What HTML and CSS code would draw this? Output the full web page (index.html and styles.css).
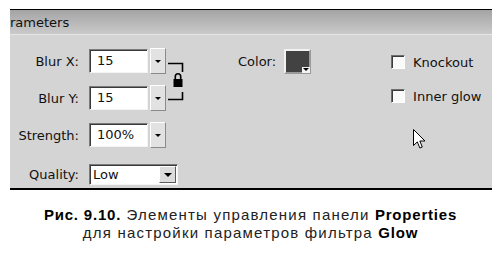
FILE: index.html
```html
<!DOCTYPE html>
<html lang="ru">
<head>
    <meta charset="UTF-8">
    <meta name="viewport" content="width=device-width, initial-scale=1.0">
    <title>Glow</title>
    <link rel="stylesheet" href="styles.css">
</head>
<body>

<div class="panel">
    <div class="panel-head">rameters</div>

    <div class="panel-body">
        <div class="fields">
            <span class="lbl">Blur X:</span>
            <div class="num">15</div>
            <div class="spin"><span class="tri"></span></div>
            <svg class="lock" width="20" height="63" viewBox="0 0 20 63">
                <path d="M2 15.5 H16.5 V24" fill="none" stroke="#000" stroke-width="1.6"/>
                <path d="M16.5 44 V51.5 H2" fill="none" stroke="#000" stroke-width="1.6"/>
                <path d="M9.3 31 V28.5 a2.7 2.7 0 0 1 5.4 0 V31" fill="none" stroke="#000" stroke-width="1.6"/>
                <rect x="7.5" y="31" width="9" height="8" fill="#000"/>
            </svg>

            <span class="lbl">Blur Y:</span>
            <div class="num">15</div>
            <div class="spin"><span class="tri"></span></div>

            <span class="lbl">Strength:</span>
            <div class="num">100%</div>
            <div class="spin"><span class="tri"></span></div>

            <span class="lbl lbl-q">Quality:</span>
            <div class="combo">Low<span class="combo-btn"><span class="tri"></span></span></div>
        </div>

        <div class="color-group">
            <span>Color:</span>
            <span class="swatch"><span class="swatch-tri"></span></span>
        </div>

        <div class="checks">
            <div class="check"><span class="box"></span>Knockout</div>
            <div class="check"><span class="box"></span>Inner glow</div>
        </div>
    </div>

    <svg class="cursor" width="13" height="21" viewBox="0 0 13 21">
        <path d="M0.5 0.5 V16.5 L4.3 12.9 L6.9 19 L9.3 18 L6.8 12 H12 Z" fill="#fff" stroke="#000" stroke-width="1"/>
    </svg>
</div>

<p class="caption">
    <b>Рис. 9.10.</b> Элементы управления панели <b>Properties</b><br>
    для настройки параметров фильтра <b>Glow</b>
</p>

</body>
</html>
```

FILE: styles.css
```css
body {
    margin: 0;
    background: #fff;
    font-family: "DejaVu Sans", Verdana, sans-serif;
    font-size: 13px;
    color: #111;
}

.panel {
    position: relative;
    margin: 9px 0 0 10px;
    width: 482px;
    background: #d4d4d4;
    border-top: 1px solid #000;
    border-bottom: 2px solid #000;
}
.panel-head {
    height: 24px;
    line-height: 26px;
    background: linear-gradient(#a4a4a4, #cacaca);
    border-bottom: 1px solid #e6e6e6;
}

.panel-body {
    display: flex;
    align-items: flex-start;
    height: 153px;
    box-sizing: border-box;
    padding-top: 13px;
}

.fields {
    display: grid;
    grid-template-columns: 79px 59px 18px 20px;
    grid-template-rows: 26px 26px 26px 26px;
    row-gap: 11px;
}
.lbl {
    grid-column: 1;
    align-self: center;
    text-align: right;
    padding-right: 10px;
}
.lbl-q {
    align-self: end;
    line-height: 21px;
}
.num {
    align-self: center;
    height: 24px;
    box-sizing: border-box;
    padding-left: 7px;
    line-height: 22px;
    background: #fff;
    border: 1px solid;
    border-color: #7a7a7a #f4f4f4 #f4f4f4 #7a7a7a;
    box-shadow: inset 1px 1px #3a3a3a;
}
.spin {
    margin-left: 2px;
    width: 16px;
    box-sizing: border-box;
    background: #e2e2e2;
    border: 1px solid;
    border-color: #fff #8a8a8a #8a8a8a #fff;
    display: flex;
    align-items: center;
    justify-content: center;
}
.tri {
    width: 0;
    height: 0;
    border-left: 3px solid transparent;
    border-right: 3px solid transparent;
    border-top: 3px solid #000;
}
.lock {
    grid-column: 4;
    grid-row: 1 / span 2;
}
.combo {
    grid-column: 2 / span 3;
    align-self: end;
    width: 89px;
    height: 21px;
    box-sizing: border-box;
    padding-left: 3px;
    line-height: 19px;
    background: #fff;
    border: 1px solid;
    border-color: #7a7a7a #f4f4f4 #f4f4f4 #7a7a7a;
    box-shadow: inset 1px 1px #3a3a3a;
    display: flex;
    justify-content: space-between;
}
.combo-btn {
    margin: 1px 1px 1px 0;
    width: 17px;
    box-sizing: border-box;
    background: #dcdcdc;
    border: 1px solid;
    border-color: #fff #5a5a5a #5a5a5a #fff;
    display: flex;
    align-items: center;
    justify-content: center;
}
.combo-btn .tri {
    border-left-width: 4px;
    border-right-width: 4px;
    border-top-width: 4px;
}

.color-group {
    margin-left: 52px;
    display: flex;
    align-items: center;
    gap: 8px;
    height: 26px;
}
.swatch {
    position: relative;
    width: 27px;
    height: 25px;
    box-sizing: border-box;
    background: #424242;
    border: 2px solid;
    border-color: #f2f2f2 #9a9a9a #9a9a9a #f2f2f2;
}
.swatch-tri {
    position: absolute;
    right: -1px;
    bottom: -1px;
    width: 8px;
    height: 6px;
    background: #f2f2f2;
}
.swatch-tri::after {
    content: "";
    position: absolute;
    left: 1px;
    top: 1px;
    border-left: 3px solid transparent;
    border-right: 3px solid transparent;
    border-top: 3px solid #000;
}

.checks {
    margin-left: 80px;
    padding-top: 7px;
    display: flex;
    flex-direction: column;
    gap: 20px;
}
.check {
    display: flex;
    align-items: center;
    gap: 8px;
    height: 14px;
}
.box {
    width: 14px;
    height: 14px;
    box-sizing: border-box;
    background: #fafafa;
    border: 1px solid;
    border-color: #6e6e6e #fff #fff #6e6e6e;
    box-shadow: inset 1px 1px #3c3c3c;
}

.cursor {
    position: absolute;
    left: 403px;
    top: 119px;
}

.caption {
    margin: 16px 0 0;
    text-align: center;
    font-family: "Liberation Sans", Arial, sans-serif;
    font-size: 15px;
    line-height: 18px;
    letter-spacing: 1.2px;
    color: #222;
}
.caption b {
    color: #000;
    letter-spacing: 0.8px;
}
```
